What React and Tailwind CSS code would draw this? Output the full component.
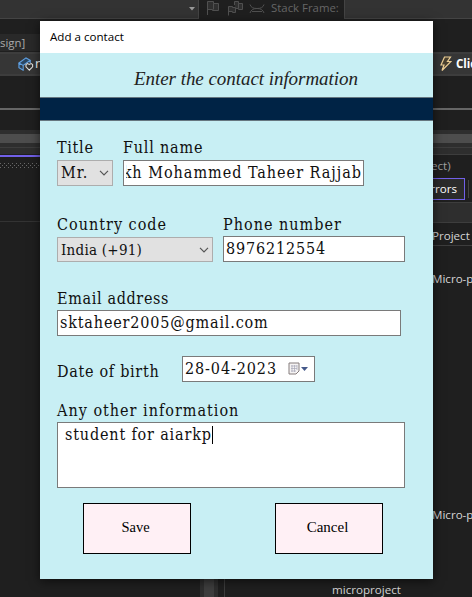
import React from "react";

const serif = "font-['DejaVu_Serif_Condensed','DejaVu_Serif',serif] [font-stretch:condensed]";
const sans = "font-['Open_Sans','Noto_Sans',sans-serif] [font-stretch:normal] tracking-normal";
const field = "border border-[#7a7a7a] bg-white whitespace-nowrap overflow-hidden";
const button =
  "h-[51px] w-[108px] border border-black bg-[#fff0f5] pb-[3px] pr-[3px] tracking-normal text-black font-['Liberation_Serif',serif]";

function Chevron() {
  return (
    <svg width="10" height="6" viewBox="0 0 10 6" fill="none" stroke="#555" strokeWidth="1.2" className="shrink-0">
      <path d="M1 0.8 5 4.8 9 0.8" />
    </svg>
  );
}

function LeftPane() {
  return (
    <div className="flex w-[225px] flex-col border-r border-[#3d3d3d]">
      <div className="h-[24px] bg-[#2e2e2e] pt-1">
        <div className="h-[9px] bg-[#4d4d4d]" />
        <div className="mt-[4px] h-px bg-[#3d3d3d]" />
      </div>
      <div className="h-[1px]" />
      <div className="h-[2px] bg-[#7160e8]" />
      <svg width="40" height="5" className="mt-[6px]" shapeRendering="crispEdges" stroke="#686868" strokeDasharray="1 3">
        <path d="M0 .5H40M2 2.500H40M0 4.500H40" />
      </svg>
      <div className="mt-[53px] h-px bg-[#333]" />
      <div className="flex flex-1 justify-end pr-[6px]">
        <div className="w-[18px] border-x-4 border-[#2e2e2e] bg-[#3e3e3e]" />
      </div>
    </div>
  );
}

function RightPane() {
  return (
    <div className={`flex flex-1 flex-col overflow-hidden text-[11.6px] text-[#d6d6d6] ${sans}`}>
      <div className="h-[24px] bg-[#2e2e2e] pt-1">
        <div className="h-[9px] bg-[#4d4d4d]" />
        <div className="mt-[4px] h-px bg-[#3d3d3d]" />
      </div>
      <div className="flex h-[24px] items-center border-b border-t border-[#3d3d3d] border-b-transparent pl-[206px] text-[#a0a0a0]">ect)</div>
      <div className="flex h-[22px] items-center">
        <div className="ml-[180px] flex h-[22px] w-[60px] items-center justify-end border border-[#7160e8] bg-[#2b2b2b] pr-[7px] text-white">Errors</div>
        <div className="ml-[3px] h-[18px] w-px bg-[#444]" />
      </div>
      <div className="mt-[2px] h-[21px] border-y border-[#3d3d3d] bg-[#2e2e2e]" />
      <div className="flex h-[23px] items-center border-b border-[#3d3d3d] pl-[207px] pt-1">Project</div>
      <div className="ml-[207px] mt-[24px] flex h-[18px] items-center whitespace-nowrap">Micro-p</div>
      <div className="ml-[207px] mt-[218px] flex h-[18px] items-center whitespace-nowrap">Micro-p</div>
      <div className="ml-[107px] mt-[57px] flex h-[18px] items-center whitespace-nowrap">microproject</div>
    </div>
  );
}

function Ide() {
  return (
    <div className={`flex h-[597px] w-[472px] flex-col overflow-hidden bg-[#1f1f1f] ${sans}`}>
      <div className="flex h-[19px] shrink-0">
        <div className="flex w-[199px] justify-end border-b border-r border-[#444] bg-[#333] pr-[3px] pt-[7px]">
          <svg width="6" height="4"><path d="M0 0h6L3 3.5z" fill="#999" /></svg>
        </div>
        <svg width="70" height="19" fill="none" stroke="#505050" strokeWidth="1">
          <g fill="#303030"><path d="M8.500 15V1.500H14.500V3.500H19.500V10.500H13.500V9.500H8.500M14.500 3.500V9.500" /><path d="M29.500 15.500V6.500H33.500V7.500H36.500V12.500H33.500V11.500H29.500M35.500 5V1.500H39.500V3.500H43.500V9.500H39.500V8.500H36.500M39.500 3.500V8.500" /></g>
          <path d="M51 4.500c1 3 3 4 7 4s6-1 7-4M51 13c1-3 3-4.500 7-4.500s6 1.500 7 4.500M53 11.500h10" />
        </svg>
        <div className="w-[75px] pl-[2px] text-[11.4px] leading-[16px] text-[#666] whitespace-nowrap">Stack Frame:</div>
        <div className="flex-1 border-b border-l border-[#444] bg-[#333]" />
      </div>
      <div className="mt-[15px] flex h-[17px] w-[100px] shrink-0 items-center bg-[#292929] text-[11.4px] text-[#aaa]">sign]</div>
      <div className="mt-px flex h-[24px] shrink-0 items-center border-y-2 border-[#3d3d3d] bg-[#363636] pl-[18px] text-[13px] text-white">
        <svg width="16" height="16" viewBox="0 0 17 16" fill="none" stroke="#5f9fe0" strokeWidth="1.200" className="shrink-0">
          <path d="M1 7 8.500 1.500 13 4 5.500 9.500ZM1 7v5l5 3M5.500 9.500V14M13 4v3" fill="#294663" />
          <path d="M12 14.500 8.500 11V8.500L10 7.500 12 8.500 14 7.500 15.500 8.500V11Z" fill="#333" stroke="#ddd" />
        </svg>
        <span className="ml-[1px] w-[405px] shrink-0">n</span>
        <svg width="12" height="16" viewBox="0 0 12 16" fill="#4a4130" stroke="#edcf95" strokeWidth="1.200" className="shrink-0"><path d="M4.500 1h6L7.500 5.500h3.500L2 14.500 4 9H1Z" /></svg>
        <span className="ml-[4px] text-[11.5px] font-bold">Clic</span>
      </div>
      <div className="mt-[32px] h-[2px] shrink-0 bg-[#666]" />
      <div className="mt-[20px] flex flex-1">
        <LeftPane />
        <RightPane />
      </div>
    </div>
  );
}

function ContactDialog() {
  return (
    <div className={`absolute left-[40px] top-[21px] flex h-[558px] w-[393px] flex-col bg-[#c8eff4] text-[16px] leading-[22px] text-[#101010] shadow-[0_2px_10px_rgba(0,0,0,0.6)] ${serif}`}>
      <div className={`flex h-[32px] shrink-0 items-center bg-white pl-[10px] text-[11.6px] text-black ${sans}`}>Add a contact</div>
      <div className="h-[44px] shrink-0 pl-[94px] pt-[15px] text-[19px] italic tracking-[-0.05px] text-[#222] font-['Liberation_Serif',serif]">Enter the contact information</div>
      <div className="h-[24px] shrink-0 border-y border-[#667780] bg-[#002345]" />
      <div className="flex flex-1 flex-col pl-[17px] pt-[16px] tracking-[0.9px]">
        <div className="flex gap-[10px]">
          <div className="w-[56px]">
            <div className="h-[23px] tracking-[0.7px]">Title</div>
            <div className="flex h-[26px] items-center justify-between border border-[#adadad] bg-[#e1e1e1] pl-[3px] pr-[3px]">Mr.<Chevron /></div>
          </div>
          <div>
            <div className="h-[23px] tracking-[0.8px]">Full name</div>
            <div className={`flex h-[26px] w-[241px] items-center justify-end pr-[1px] ${field}`}>
              <span className="flex w-[236px] justify-end overflow-hidden tracking-[0.99px]">kh Mohammed Taheer Rajjab</span>
            </div>
          </div>
        </div>
        <div className="mt-[28px] flex gap-[10px]">
          <div className="w-[156px]">
            <div className="h-[23px] tracking-[1px]">Country code</div>
            <div className="flex h-[25px] items-center justify-between border border-[#adadad] bg-[#e1e1e1] pl-[3px] pr-[3px] text-[15px] tracking-[0.25px]">India (+91)<Chevron /></div>
          </div>
          <div>
            <div className="h-[22px] tracking-[1px]">Phone number</div>
            <div className={`flex h-[26px] w-[182px] items-center pl-[2px] tracking-[0.85px] ${field}`}>8976212554</div>
          </div>
        </div>
        <div className="mt-[26px] h-[22px] tracking-[0.65px]">Email address</div>
        <div className={`flex h-[26px] w-[344px] items-center pl-[2px] tracking-[0.83px] ${field}`}>sktaheer2005@gmail.com</div>
        <div className="mt-[20px] flex">
          <div className="w-[125px] pt-[5px] tracking-[0.7px]">Date of birth</div>
          <div className={`flex h-[26px] w-[133px] items-center pl-[2px] ${field}`}>
            <span className="w-[103px]">28-04-2023</span>
            <svg width="21" height="14" viewBox="0 0 21 14" className="shrink-0">
              <path d="M1 1h10v8l-3 3H1z" fill="#f5f3f3" stroke="#857c7c" />
              <path d="M3 4h6M3 6.500h6M3 9h5M4 3v7M6.500 3v7M9 3v5" stroke="#a8a8b8" strokeWidth=".7" />
              <path d="M13 5h7l-3.500 4z" fill="#45598a" />
            </svg>
          </div>
        </div>
        <div className="mt-[17px] h-[22px] tracking-[1px]">Any other information</div>
        <div className={`flex h-[66px] w-[348px] items-start pl-[7px] pt-px tracking-[0.83px] ${field}`}>
          student for aiarkp<span className="mt-[2px] h-[18px] w-px bg-black" />
        </div>
        <div className="mt-[15px] flex gap-[84px] pl-[26px]">
          <button className={`text-[14.5px] ${button}`}>Save</button>
          <button className={`text-[15px] ${button}`}>Cancel</button>
        </div>
      </div>
    </div>
  );
}

export default function App() {
  return (
    <div className="relative h-[597px] w-[472px] overflow-hidden">
      <Ide />
      <ContactDialog />
    </div>
  );
}
